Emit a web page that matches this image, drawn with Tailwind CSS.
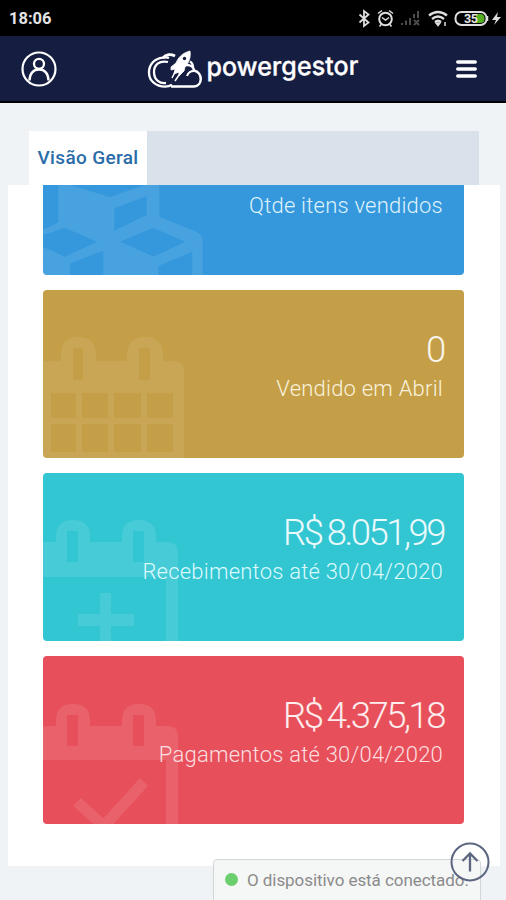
<!DOCTYPE html>
<html lang="pt-BR">
<head>
  <meta charset="UTF-8" />
  <meta name="viewport" content="width=device-width, initial-scale=1.0">
  <title>powergestor - Visão Geral</title>
  <script src="https://cdn.jsdelivr.net/npm/@tailwindcss/browser@4"></script>
</head>
<body class="relative h-[900px] overflow-hidden bg-[#eff3f6] font-['Roboto',sans-serif]">
  <!-- Status bar -->
  <div class="flex h-9 items-center justify-between bg-black pl-[9px] pr-1 pt-[3px] text-[#e4e4e4]">
    <span class="text-[16.500px] font-bold leading-none">18:06</span>
    <svg class="h-6" width="146" height="24" viewBox="356 8 146 24" fill="none" stroke="#dedede" stroke-width="1.5">
      <path d="M359.500 14.500l9 8-4.500 3.500V11l4.500 3.500-9 8" stroke-width="1.800" />
      <circle cx="385.500" cy="19" r="6.300" stroke-width="2" />
      <path d="M378 13.500l4-3M393 13.500l-4-3M381.500 24l-2 2.500M389.500 24l2 2.500M382 17.500l3.500 2.500 3.500-2.500" />
      <path d="M402 25v-2M406 25v-4.500M410 25v-7M414 18v-4M418 18v-7M414 20l5 5M419 20l-5 5" stroke="#4c4c4c" stroke-width="2" />
      <path d="M429 15.500q9-7 18 0M432 19q6-5 12 0M435 22q3-2.500 6 0" stroke-width="2.300" />
      <path d="M436 23h4l-2 2.500z" fill="#dedede" />
      <path d="M445 22v4" />
      <rect x="455.500" y="12" width="31" height="13" rx="6" stroke-width="2" />
      <path d="M476 14h4.500q4 0 4 4.500t-4 4.500H476z" fill="#55ad22" stroke="none" />
      <text x="464" y="23" fill="#e4e4e4" stroke="none" font-size="12.500" font-weight="700" textLength="14">35</text>
      <path d="M487.500 16v5" />
      <path d="M498 12l-6 8h4l-2 5 7-8h-4z" fill="#dedede" stroke="none" />
    </svg>
  </div>

  <!-- Navigation -->
  <header class="flex h-[67px] items-center justify-between border-b-2 border-black bg-[#151d40] pl-[21px] pr-[29px] text-white">
    <svg width="36" height="36" viewBox="0 0 36 36" fill="none" stroke="currentColor">
      <circle cx="18" cy="18" r="16.500" stroke-width="2.200" />
      <circle cx="18" cy="12.800" r="5" stroke-width="2.300" />
      <path d="M8.500 29.500c0-7 4-11 9.500-11s9.500 4 9.500 11" stroke-width="2.300" />
    </svg>
    <svg class="-mr-px overflow-visible" width="220" height="44" viewBox="147 46 220 44" fill="none" stroke="currentColor">
      <path d="M169 57c-2-.8-4-.8-6-.3-9 1-14 7-14 15s7 14 16 14c3 0 5-.5 7-2" stroke-width="2.300" />
      <path d="M168 61c-9-2-14 3-14 10 0 8 6 12 12 11" stroke-width="2.300" />
      <path d="M163 57c3-4 8-4 12-2" stroke-width="3" />
      <path d="M171 85.500h23c9-1 9-14 0-16-1-7-13-8-16 2M190 60.500c2 1 3 4 3 7" stroke-width="2.500" />
      <path d="M187 75c1-3 4-5 7-5" stroke-width="2" />
      <path d="M190 50c-8 2-12 7-14 12l-5 4v3l4-1-1 5 5-2v4l5-5 1-4c4-4 6-10 5-16z" fill="currentColor" stroke="currentColor" stroke-width=".8" />
      <path d="M176 69l-4 8M181 71l-6 9" stroke-width="1.500" />
      <circle cx="184.500" cy="57.500" r="1.700" fill="#151d40" stroke="none" />
      <text x="206.500" y="75" transform="rotate(-.5 206.500 75)" fill="currentColor" stroke="currentColor" stroke-width=".3" font-family="Inter, sans-serif" font-size="26" font-weight="500" textLength="152" lengthAdjust="spacingAndGlyphs">powergestor</text>
    </svg>
    <svg width="21" height="18" viewBox="0 0 21 18" stroke="currentColor" stroke-width="3.500" stroke-linecap="round">
      <path d="M1.800 2h17.400M1.800 9h17.400M1.800 16h17.400" />
    </svg>
  </header>

  <main class="pl-2 pr-1.5 pt-7">
    <div class="ml-[21px] mr-[21px] flex h-[54px] bg-[#d9e2eb]">
      <a href="#" class="flex w-[118px] items-center justify-center whitespace-nowrap bg-white text-[19px] font-medium tracking-[0.350px] text-[#2b6ca8]">Visão Geral</a>
    </div>

    <section class="flex h-[681px] flex-col gap-[15px] bg-white pl-[35px] pr-9">
      <!-- Itens vendidos, scrolled under the tabs -->
      <div class="relative h-[90px] shrink-0 overflow-hidden rounded-b-[4px] bg-[#3598dc] text-right">
        <svg class="absolute left-0 top-0" width="160" height="90" viewBox="129 255 480 270">
          <path class="fill-white/10" fill-rule="evenodd" d="M175 255H478V350L590 396Q608 405 608 425V525H128V390L175 367ZM210 255L330 292 435 255ZM343 325V392L440 345V288ZM129 405V441L195 470 292 425 195 383ZM210 490V525H310V452ZM360 425L460 470 557 425 460 383ZM475 498V525H577V455Z" />
        </svg>
        <p class="relative pr-[21px] pt-[5px] text-[22px] font-light leading-8 tracking-[0.220px] text-[#def2fc]">Qtde itens vendidos</p>
      </div>

      <div class="relative h-[168px] shrink-0 overflow-hidden rounded-[4px] bg-[#c49f47] pr-[21px] pt-10 text-right font-light">
        <svg class="absolute left-0 top-0" width="150" height="168" viewBox="0 0 150 168">
          <path class="fill-white/8" fill-rule="evenodd" d="M0 71H18V65Q18 47 35.500 47T53 65V71H84V65Q84 47 102 47T120 65V71H130Q141 71 141 82V168H0ZM30 58V90H40V58ZM96 58V90H107V58ZM8 103V128H33V103ZM39 103V128H65V103ZM71 103V128H98V103ZM104 103V128H130V103ZM8 134V162H33V134ZM39 134V162H65V134ZM71 134V162H98V134ZM104 134V162H130V134Z" />
        </svg>
        <p class="relative -mr-px text-[36.500px] leading-10 tracking-[-2.200px] text-white/90">0</p>
        <p class="relative mt-[3px] text-[22px] leading-8 tracking-[0.220px] text-[#faf2dc]">Vendido em Abril</p>
      </div>

      <div class="relative h-[168px] shrink-0 overflow-hidden rounded-[4px] bg-[#32c5d2] pr-[21px] pt-10 text-right font-light">
        <svg class="absolute left-0 top-0" width="150" height="168" viewBox="0 0 150 168">
          <path class="fill-white/10" fill-rule="evenodd" d="M0 69H13V64Q13 47 30 47T47 64V69H79V64Q79 47 96 47T113 64V69H124Q135 69 135 80V168H123V104H0ZM24 58V89H35V58ZM90 58V89H101V58Z" />
          <path class="fill-white/10" d="M57 120H68V141H91V153H68V168H57V153H35V141H57Z" />
        </svg>
        <p class="relative -mr-px text-[36.500px] leading-10 tracking-[-2.500px] [word-spacing:-1px] text-white/90">R$ 8.051,99</p>
        <p class="relative mt-[3px] text-[22px] leading-8 tracking-[0.220px] text-[#dcfafc]">Recebimentos até 30/04/2020</p>
      </div>

      <div class="relative h-[168px] shrink-0 overflow-hidden rounded-[4px] bg-[#e7505a] pr-[21px] pt-10 text-right font-light">
        <svg class="absolute left-0 top-0" width="150" height="168" viewBox="0 0 150 168">
          <path class="fill-white/10" fill-rule="evenodd" d="M0 70H13V65Q13 48 30 48T47 65V70H79V65Q79 48 96 48T113 65V70H124Q135 70 135 81V168H123V104H0ZM24 59V90H35V59ZM90 59V90H101V59Z" />
          <path class="stroke-white/10" fill="none" stroke-width="11" d="M34 146L61 170 101 126" />
        </svg>
        <p class="relative -mr-px text-[36.500px] leading-10 tracking-[-2.500px] [word-spacing:-1px] text-white/90">R$ 4.375,18</p>
        <p class="relative mt-[3px] text-[22px] leading-8 tracking-[0.220px] text-[#fcdfe0]">Pagamentos até 30/04/2020</p>
      </div>
    </section>
  </main>

  <!-- Connection notice -->
  <div class="absolute left-[213px] top-[859px] flex h-12 w-[268px] gap-[9px] rounded-t-[4px] border border-[#d3d6d8] bg-[#f5f6f6] pl-[11px] pt-2 text-[17px] leading-6 tracking-[-0.060px] text-[#8b8b8b]">
    <span class="mt-[5px] size-[13px] shrink-0 rounded-full bg-[#6bcf6e]"></span>
    <span class="whitespace-nowrap">O dispositivo está conectado.</span>
  </div>

  <!-- Back to top -->
  <a href="#" class="absolute left-[450px] top-[842px] text-[#5c6680]">
    <svg width="40" height="40" viewBox="0 0 40 40" fill="none" stroke="currentColor" stroke-width="2">
      <circle cx="20" cy="20" r="18.500" />
      <path d="M20 29.500V12M12.500 19L20 11.500 27.500 19" stroke-width="2.300" />
    </svg>
  </a>
</body>
</html>
